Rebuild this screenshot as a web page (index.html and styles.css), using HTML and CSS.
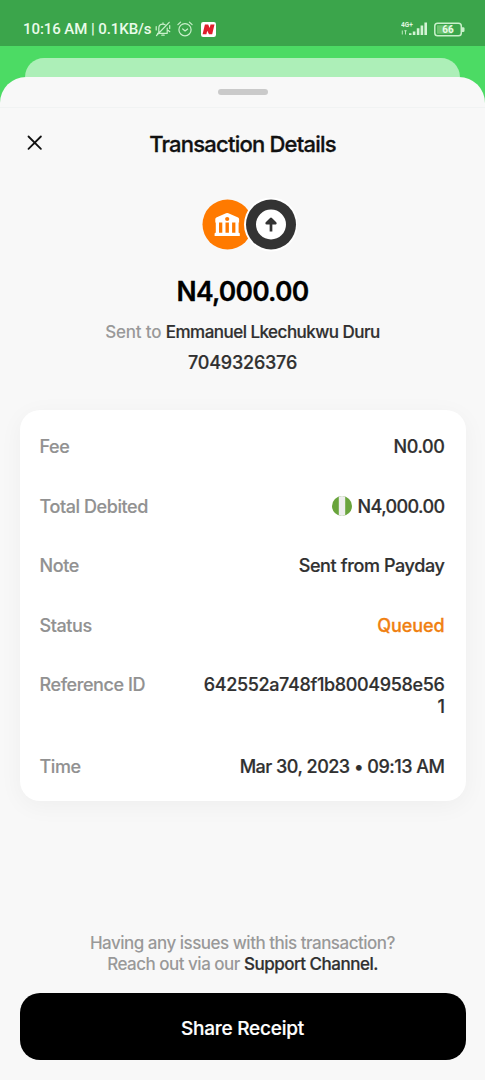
FILE: index.html
```html
<!DOCTYPE html>
<html lang="en">
<head>
<meta charset="utf-8">
<title>Transaction Details</title>
<link rel="stylesheet" href="styles.css">
</head>
<body>
<div class="screen">
  <header class="statusbar">
    <span class="clock">10:16 AM | 0.1KB/s</span>
    <svg class="mute" width="16" height="16" viewBox="0 0 16 16" fill="none" stroke="#c9f0ca" stroke-width="1.2" stroke-linecap="round"><path d="M2.5 12.3h9.800M3.800 12V7.200C3.800 4.800 5.600 3.200 8 3.200c.8 0 1.500.2 2.100.5M12.200 7v5M6.800 14.200h2.400M1.500 14.500 14.200 1.300M1.200 5.500v3.500M14.700 4.500v3M13.300 9.500l1.500 1.200M8 1.800v1"/></svg>
    <svg class="alarm" width="16" height="16" viewBox="0 0 16 16" fill="none" stroke="#c9f0ca" stroke-width="1.2" stroke-linecap="round" stroke-linejoin="round"><circle cx="8" cy="8.700" r="6.100"/><path d="M.9 3.600 3.600 1.100M15.100 3.600l-2.700-2.500M5.700 8l2.400 2 2.500-2"/></svg>
    <svg class="news" width="15" height="15" viewBox="0 0 15 15"><rect width="15" height="15" rx="2.200" fill="#fff"/><path d="M1.600 12.300 3.900 2.500h3.300l1.500 3.400.8-3.400h4l-2.300 9.800H8L6.200 8.800l-.8 3.500z" fill="#df1f2d"/></svg>
    <svg class="signal" width="27" height="16" viewBox="0 0 27 16"><text x="0" y="6" class="net">4G+</text><path d="M1.300 9.500v4M4.500 9.500v4M3.300 9.800h2.400" stroke="#c9f0ca" stroke-width=".9"/><path d="M8 14v-1.800h2.500V14zM11.800 14v-3.500h2.600V14zM15.800 14V7.300h2.600V14zM19.600 14V4.500h2.600V14zM23.400 14V1.500H26V14z" fill="#d3f3d4"/></svg>
    <svg class="battery" width="31" height="15" viewBox="0 0 31 15"><rect x=".8" y="1.200" width="26.500" height="12.600" rx="2.800" fill="none" stroke="#c9f0ca" stroke-width="1.500"/><rect x="3" y="3.300" width="15" height="8.400" fill="#6dc26f"/><path d="M28 5.200h1.300q1.200 0 1.200 1.200v2.300q0 1.200-1.200 1.200H28z" fill="#c9f0ca"/><text x="14" y="11.300" text-anchor="middle" class="level">66</text></svg>
  </header>
  <div class="behind"></div>
  <main class="sheet">
    <div class="grip"><i></i></div>
    <div class="titlebar">
      <svg class="close" width="16" height="16" viewBox="0 0 16 16" stroke="#111" stroke-width="1.800" stroke-linecap="round"><path d="M1.500 1.500l12.400 12.400M13.900 1.500 1.500 13.900"/></svg>
      <h1>Transaction Details</h1>
    </div>
    <svg class="emblem" width="96" height="54" viewBox="0 0 96 54">
      <circle cx="26.500" cy="26.500" r="25" fill="#ff7a00"/>
      <circle cx="70" cy="26.500" r="27" fill="#fff"/>
      <circle cx="70" cy="26.500" r="25" fill="#333"/>
      <path d="M14.300 24.500v-3.600q0-1 1-1.500l9.700-4.100q1.200-.5 2.400 0l9.700 4.100q1 .5 1 1.500v3.600zM14.600 34.800h23.200q1 0 1 1V38H13.600v-2.200q0-1 1-1z" fill="#fff"/>
      <path d="M16.400 24v12M22.900 24v12M29.500 24v12M36 24v12" stroke="#fff" stroke-width="3.200"/>
      <circle cx="26.200" cy="21" r="2.100" fill="#ff7a00"/>
      <circle cx="70" cy="26.500" r="15" fill="#fff"/>
      <path d="M70 33.500V23M65.700 25.200 70 20.900l4.300 4.300z" stroke="#333" stroke-width="2.700" fill="#333" stroke-linejoin="round"/>
    </svg>
    <p class="amount">N4,000.00</p>
    <p class="recipient"><span class="soft">Sent to</span> <span class="name">Emmanuel Lkechukwu Duru</span></p>
    <p class="phone">7049326376</p>
    <dl class="card">
      <div class="row"><dt>Fee</dt><dd>N0.00</dd></div>
      <div class="row"><dt>Total Debited</dt><dd class="debit"><svg class="flag" width="20" height="20" viewBox="0 0 20 20"><defs><clipPath id="disc"><circle cx="10" cy="10" r="10"/></clipPath></defs><g clip-path="url(#disc)"><path d="M0 0h20v20H0z" fill="#69a43c"/><path d="M6.800 0h6.400v20H6.800z" fill="#eee"/></g></svg>N4,000.00</dd></div>
      <div class="row"><dt>Note</dt><dd>Sent from Payday</dd></div>
      <div class="row"><dt>Status</dt><dd class="queued">Queued</dd></div>
      <div class="row tall"><dt>Reference ID</dt><dd class="reference">642552a748f1b8004958e561</dd></div>
      <div class="row"><dt>Time</dt><dd class="time">Mar 30, 2023 • 09:13 AM</dd></div>
    </dl>
    <footer class="help">Having any issues with this transaction?<br>Reach out via our <a>Support Channel.</a></footer>
    <button class="share">Share Receipt</button>
  </main>
</div>
</body>
</html>
```
FILE: styles.css
```css
* { box-sizing: border-box; margin: 0; padding: 0; }
body { background: #4cdb64; font-family: Inter, "Liberation Sans", sans-serif; font-weight: 500; font-size: 18px; color: #303030; }
.screen { width: 485px; height: 1080px; display: flex; flex-direction: column; overflow: hidden; }
.statusbar { height: 46px; flex: none; background: #3ba54b; display: flex; align-items: center; padding: 12px 20px 0 23px; }
.clock { font: 500 15px Roboto, sans-serif; letter-spacing: -.07px; color: #e9fbe9; width: 132px; white-space: nowrap; }
.alarm { margin-left: 6px; }
.news { margin-left: 8px; }
.signal { margin-left: auto; }
.battery { margin-left: 6px; }
.net { font: 700 6.500px Roboto, sans-serif; fill: #e0f7e0; }
.level { font: 700 10px Roboto, sans-serif; fill: #e9fbe9; }
.behind { height: 19px; flex: none; margin: 12px 25px 0; background: #adefb8; border-radius: 19px 19px 0 0; }
.sheet { flex: 1; background: #f8f8f8; border-radius: 26px 26px 0 0; display: flex; flex-direction: column; align-items: center; }
.grip { width: 100%; height: 31px; flex: none; border-bottom: 1px solid #f1f3f3; display: flex; justify-content: center; padding-top: 12px; }
.grip i { width: 50px; height: 6px; border-radius: 3px; background: #cacaca; }
.titlebar { width: 100%; height: 72px; flex: none; display: grid; grid-template-columns: 70px 1fr 70px; align-items: center; }
.close { margin: 0 0 2px 27px; }
h1 { font-size: 22px; font-weight: 500; text-align: center; color: #111; letter-spacing: -.78px; -webkit-text-stroke: .3px; }
.emblem { flex: none; margin: 18px 0 0 13px; }
.amount { font-size: 26.500px; line-height: 34px; font-weight: 600; letter-spacing: -.8px; color: #000; margin-top: 22px; -webkit-text-stroke: .3px; }
.recipient { font-size: 17px; line-height: 24px; margin-top: 12px; white-space: nowrap; }
.soft { color: #999; letter-spacing: -.2px; }
.name { letter-spacing: -.52px; -webkit-text-stroke: .2px; }
.phone { line-height: 24px; margin-top: 7px; letter-spacing: -.2px; -webkit-text-stroke: .2px; }
.card { width: 446px; height: 391px; flex: none; margin-top: 35px; padding: 26px 21px 26px 20px; background: #fff; border-radius: 20px; box-shadow: 0 5px 24px rgba(0,0,0,.045); }
.row { display: flex; justify-content: space-between; height: 59.500px; line-height: 22px; letter-spacing: -.38px; }
.row.tall { height: 81.500px; }
dt { color: #919191; height: 22px; letter-spacing: -.42px; -webkit-text-stroke: .15px; }
dd { text-align: right; -webkit-text-stroke: .2px; }
.debit { display: flex; align-items: center; gap: 6px; height: 22px; letter-spacing: -.6px; }
.flag { margin-top: -2px; }
.queued { color: #f08010; letter-spacing: -.1px; -webkit-text-stroke: .3px; }
.reference { width: 242px; letter-spacing: -.35px; word-break: break-all; }
.time { letter-spacing: -.5px; }
.help { margin-top: 132px; font-size: 17px; line-height: 21px; text-align: center; color: #999; letter-spacing: -.5px; }
.help a { color: #303030; -webkit-text-stroke: .2px; }
.share { width: 446px; height: 67px; flex: none; margin-top: 18px; padding-top: 4px; border: 0; border-radius: 20px; background: #000; color: #fff; font: 500 19px Inter, sans-serif; letter-spacing: -.22px; -webkit-text-stroke: .2px; }
```
